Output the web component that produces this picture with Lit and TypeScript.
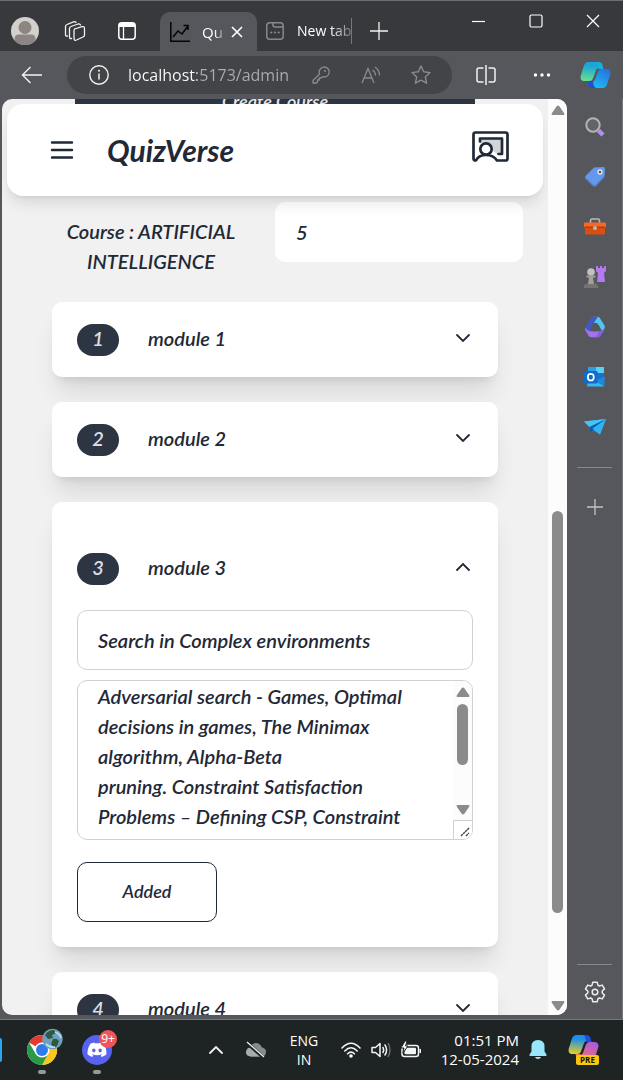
import { LitElement, html, css, svg, nothing } from "lit";
import { customElement, property, state } from "lit/decorators.js";

interface CourseModule {
  id: number;
  name: string;
  topic: string;
  outline: string;
}

const MODULES: CourseModule[] = [
  { id: 1, name: "module 1", topic: "", outline: "" },
  { id: 2, name: "module 2", topic: "", outline: "" },
  {
    id: 3,
    name: "module 3",
    topic: "Search in Complex environments",
    outline:
      "Adversarial search - Games, Optimal decisions in games, The Minimax algorithm, Alpha-Beta pruning.\u00a0Constraint Satisfaction Problems – Defining CSP, Constraint Propagation, backtracking search",
  },
  { id: 4, name: "module 4", topic: "", outline: "" },
];

const line = (w: number, h: number, body: unknown, cls = "") =>
  html`<svg class="icon ${cls}" width=${w} height=${h} viewBox="0 0 ${w} ${h}" aria-hidden="true">${body}</svg>`;

const copilotShape = (c: string[]) => svg`
  <defs>
    <linearGradient id="ca" x1="0.4" y1="0" x2="0.3" y2="1"><stop offset="0.2" stop-color=${c[0]}/><stop offset="1" stop-color=${c[1]}/></linearGradient>
    <linearGradient id="cb" x1="0.8" y1="0" x2="0.3" y2="1"><stop offset="0" stop-color=${c[2]}/><stop offset="1" stop-color=${c[3]}/></linearGradient>
  </defs>
  <path d="M9 1h9.500q3 0 4 3.200L23.500 8H20q-3 0-4-3T12 2z" fill=${c[4]}/>
  <path d="M22 27h-9.500q-3 0-4-3.200L7.500 20H11q3 0 4 3t4 3z" fill=${c[5]}/>
  <path d="M8.500 1H14q2.500 0 3.300 3l.7 3q-1.500.5-2.300 3L13 17.500q-1 2.500-3.500 2.500H5Q-.5 20 .8 14.500L4 4.500Q5.200 1 8.500 1z" fill="url(#ca)"/>
  <path d="M22.500 27H17q-2.500 0-3.300-3L13 21q1.500-.5 2.300-3L18 10.500Q19 8 21.500 8H26q5.500 0 4.200 5.500L27 23.500Q25.800 27 22.500 27z" fill="url(#cb)"/>`;

const icons = {
  avatar: line(28, 28, svg`
    <circle cx="14" cy="14" r="14" fill="#d3cfcb"/>
    <circle cx="14" cy="10.500" r="6.500" fill="#8b8683"/>
    <path d="M3.500 23.500Q3 17.500 8 17.500h12q5 0 4.500 6A14 14 0 0 1 3.500 23.500z" fill="#8b8683"/>`),
  workspaces: line(22, 22, svg`
    <g fill="none" stroke="#f2f2f2" stroke-width="1.300" stroke-linejoin="round" stroke-linecap="round">
      <path d="M10.500 9l7.500-2.300q2.500-.7 2.500 1.800v6.500q0 1.500-1.500 2l-6.500 3q-2.500 1-2.500-1.500V10.500q0-1.200 1-1.500z"/>
      <path d="M7.500 18.500q-2 .500-2-1.500V8.500q0-1.500 1.500-2L14 4q2-.500 2.500 1"/>
      <path d="M3.500 16q-2 .500-2-1.500V6.500Q1.500 5 3 4.500L9.500 1.800q2-.6 2.500.7"/>
    </g>`),
  verticalTabs: line(18, 18, svg`
    <rect x=".8" y=".8" width="16.400" height="16.400" rx="3" fill="none" stroke="#fff" stroke-width="1.500"/>
    <path d="M1 5V3.500Q1 1 3.500 1h11Q17 1 17 3.500V5z" fill="#fff"/><path d="M5.500 5v12" stroke="#fff" stroke-width="1.300"/>`),
  chart: line(20, 20, svg`
    <path d="M.8 0v19.200H20M3 15l5-6 4 3 6-8M13.500 3.500H18V8" fill="none" stroke="#050505" stroke-width="1.500"/>`),
  close: line(12, 12, svg`<path d="M1 1l10 10M11 1L1 11" stroke="#fff" stroke-width="1.600"/>`),
  newTabPage: line(18, 18, svg`
    <g fill="none" stroke="#88898c" stroke-width="1.500"><rect x=".8" y=".8" width="16.400" height="16.400" rx="3"/><path d="M7 1v2q0 2 2 2h8"/></g>
    <g fill="#88898c"><circle cx="5.300" cy="10.500" r="1.100"/><circle cx="9" cy="10.500" r="1.100"/><circle cx="12.700" cy="10.500" r="1.100"/></g>`),
  plus: line(18, 18, svg`<path d="M9 0v18M0 9h18" stroke="#f2f2f2" stroke-width="1.300"/>`),
  plusDim: line(16, 16, svg`<path d="M8 0v16M0 8h16" stroke="#c4c4c6" stroke-width="1.300"/>`),
  minimise: line(14, 14, svg`<path d="M0 7.500h13" stroke="#fff" stroke-width="1.200"/>`),
  maximise: line(14, 14, svg`<rect x="1" y="1" width="12" height="12" rx="1.500" fill="none" stroke="#fff" stroke-width="1.200"/>`),
  quit: line(14, 14, svg`<path d="M1 1l12 12M13 1L1 13" stroke="#fff" stroke-width="1.200"/>`),
  back: line(22, 18, svg`<path d="M9.500 1L1.500 9l8 8M1.500 9H21" fill="none" stroke="#f2f2f2" stroke-width="1.400"/>`),
  info: line(22, 22, svg`
    <circle cx="11" cy="11" r="9.200" fill="none" stroke="#f2f2f2" stroke-width="1.400"/>
    <path d="M11 9.500v6" stroke="#f2f2f2" stroke-width="1.500"/><circle cx="11" cy="6.800" r="1" fill="#f2f2f2"/>`),
  key: line(18, 18, svg`
    <g fill="none" stroke="#8a8b8d" stroke-width="1.300" stroke-linejoin="round"><path d="M1 14.500L7.600 8A5 5 0 1 1 10.500 10.700L9 12H7.200v2H5.500v2l-1 1H1z"/></g>
    <circle cx="13" cy="5" r="1" fill="#8a8b8d"/>`),
  readAloud: line(20, 18, svg`
    <g fill="none" stroke="#8a8b8d" stroke-width="1.300"><path d="M1 17L7 2.500 13 17M3.200 12h7.600M11.500 4q3 2 3 5.500M14 1q4.500 3 4.500 8.500"/></g>`),
  star: line(20, 20, svg`
    <path d="M10 1l2.700 5.800 6.300.8-4.700 4.300 1.300 6.300L10 15.100l-5.600 3.100 1.300-6.300L1 7.600l6.300-.8z" fill="none" stroke="#8a8b8d" stroke-width="1.400" stroke-linejoin="round"/>`),
  split: line(20, 20, svg`
    <g fill="none" stroke="#f2f2f2" stroke-width="1.500"><path d="M7.500 3H3Q1 3 1 5v10q0 2 2 2h4.500M12.500 3H17q2 0 2 2v10q0 2-2 2h-4.500M10 0v20"/></g>`),
  dots: line(18, 6, svg`<g fill="#fff"><circle cx="2.500" cy="3" r="1.700"/><circle cx="9" cy="3" r="1.700"/><circle cx="15.500" cy="3" r="1.700"/></g>`),
  copilot: line(31, 28, copilotShape(["#1aa7d8", "#6be08a", "#2870e0", "#1eb8f4", "#14b0e4", "#1c50dc"])),
  search: line(22, 22, svg`
    <circle cx="9" cy="9" r="6.700" fill="#616369" stroke="#b5b3b0" stroke-width="2"/>
    <path d="M14.500 14.500l4.500 4.500" stroke="#b78cf0" stroke-width="4.500"/>`),
  tag: line(22, 22, svg`
    <path d="M10 1.500L19 1q2 0 2 2l-.5 8L12 20q-1.500 1-3 0L1.500 13q-1-1.500 0-3z" fill="#6597ea"/>
    <path d="M1.200 11L9 18.500q1.500 1 3 0l8.600-9-.1 1.500L12 20q-1.500 1-3 0L1.500 13q-.6-1-.3-2z" fill="#4d7bd0"/>
    <circle cx="16" cy="6" r="2" fill="#56575c" stroke="#e6e6e6" stroke-width="1.300"/>`),
  toolbox: line(22, 20, svg`
    <path d="M6.500 6V3.500Q6.500 2 8 2h6q1.500 0 1.500 1.500V6" fill="none" stroke="#b9bab9" stroke-width="1.600"/>
    <rect x="0" y="5.500" width="22" height="5" rx="1" fill="#f26a26"/><path d="M1 10h20v6.500q0 1-1 1H2q-1 0-1-1z" fill="#dc4d12"/>
    <path d="M1 9.500h20v1.500H1z" fill="#b93c0b"/><circle cx="11" cy="11" r="2" fill="#bcb8b4"/>`),
  chess: line(22, 22, svg`
    <path d="M12 0h2v2h2V0h2v2h2V0h2v5l-2 2 1 9h-8l1-9-2-2z" fill="#b37bee"/>
    <circle cx="7" cy="6" r="3.800" fill="#c2c1bd"/><path d="M2.500 9.500h9v2h-9zM5 11.500h4l1 6.500h1.500q2 0 2 2.500V22H.5v-1.500Q.5 18 2.500 18H4z" fill="#a3a19e"/>
    <path d="M.5 20Q.5 18 2.500 18h9q2 0 2 2v2H.5z" fill="#76746f"/>`),
  m365: line(22, 22, svg`
    <path d="M9 .8h5q1 0 1.500.7l5 8q.8 1.500 0 3L18.500 16 15 9.500Q13.500 7 11 7H8L6.500 3Q7.500 1 9 .8z" fill="#52c6f0"/>
    <path d="M9 .8Q7.500 1 6.500 2.500l-5.200 9q-.6 1.500.1 2.800L5 20l1-4.500q0-1.500 1-3L10.500 6 14 .8z" fill="#4457c4"/>
    <path d="M1.300 11.500q-.6 1.500.1 2.800l3.200 5.500Q5.500 21.200 7 21.200h7q1.500 0 2.300-1.300l4.200-7q-1.500 2.300-4.500 2.300H7.500Q3 15 1.300 11.500z" fill="#a472ea"/>
    <path d="M20.500 12.500l-4.200 7.300q-.8 1.400-2.300 1.400h-2l3-6q3 0 5.500-2.700z" fill="#7b63e4"/>
    <path d="M9 7h4l2.400 4-2.400 4.200H8.500L6.700 12z" fill="#56575c"/>`),
  outlook: line(22, 20, svg`
    <rect x="4" y="0" width="16" height="13" rx="1" fill="#2f9ee6"/><path d="M12 0h8v6h-8z" fill="#5ad0f7"/><path d="M12 6h8v6h-8z" fill="#1373cf"/>
    <path d="M3 19.500h16.500l1-9.500L12 15l-8-4z" fill="#35b8ee"/><path d="M20.500 10v9.500L10 13.500z" fill="#1b88d8"/>
    <rect x="0" y="4" width="13.500" height="12.500" rx="1.200" fill="#0f6cc9"/><ellipse cx="6.800" cy="10.200" rx="3" ry="3.300" fill="none" stroke="#fff" stroke-width="1.700"/>`),
  plane: line(22, 18, svg`
    <path d="M0 3.500L22 1 16 16.500l-6-4-2.500 2L5.500 9z" fill="#2fa9ec"/><path d="M0 3.500L22 1 5.500 9z" fill="#45c4f6"/>
    <path d="M22 1L5.500 9l1.500 6 3-3z" fill="#0b5cab"/><path d="M22 1L8.500 10.500 16 16.500z" fill="#30b3f2"/>`),
  gear: line(22, 22, svg`
    <path d="M8.800 1.200h4.400l.7 3 1.400.8 3-.9 2.200 3.800-2.300 2.100v2l2.300 2.100-2.200 3.800-3-.9-1.400.8-.7 3H8.800l-.7-3-1.400-.8-3 .9-2.200-3.800L3.800 12v-2L1.500 7.900l2.200-3.800 3 .9 1.400-.8z" fill="none" stroke="#ececec" stroke-width="1.500" stroke-linejoin="round"/>
    <circle cx="11" cy="11" r="2.800" fill="none" stroke="#ececec" stroke-width="1.500"/>`),
  menu: line(24, 20, svg`<path d="M2 2.500h20M2 10h20M2 17.500h20" stroke="#1f2937" stroke-width="2.400" stroke-linecap="round"/>`),
  teacher: line(40, 36, svg`
    <path d="M10 10.500h22V26h-5l-5.500-4.500-4-6L10 15z" fill="#d2d4d7"/>
    <g fill="none" stroke="#1f2937" stroke-width="2.700" stroke-linecap="round" stroke-linejoin="round">
      <path d="M6 32.500Q3.500 32.500 3.500 30.500V6.500Q3.500 4.500 5.500 4.500h30q2 0 2 2v24q0 2-2 2H27Q23.500 27 16 27T6 32.500z"/>
      <path d="M10 13.500v-3h22V26h-3.500"/><circle cx="16" cy="21" r="5.700" fill="#fff"/>
    </g>`),
  triUp: line(14, 10, svg`<path d="M1.500 10Q0 10 1 8L5.500 1.500Q7-.5 8.500 1.500L13 8q1 2-.5 2z" fill="#8b8b8b"/>`),
  triDown: line(14, 10, svg`<path d="M1.500 0Q0 0 1 2l4.500 6.500q1.500 2 3 0L13 2q1-2-.5-2z" fill="#8b8b8b"/>`),
  chevronDown: line(16, 10, svg`<path d="M2 2l6 6 6-6" fill="none" stroke="#1f2937" stroke-width="1.800" stroke-linecap="round"/>`),
  chevronUp: line(16, 10, svg`<path d="M2 8l6-6 6 6" fill="none" stroke="#1f2937" stroke-width="1.800" stroke-linecap="round"/>`),
  chrome: line(46, 46, svg`
    <circle cx="23" cy="23" r="15" fill="#fff"/>
    <path d="M23 23L10 15.500A15 15 0 0 1 36 15.500H23z" fill="#e33b2e"/>
    <path d="M23 23L36 15.500A15 15 0 0 1 23 38l6.500-11.500z" fill="#fcc61a"/>
    <path d="M23 23l6.500 3.500L23 38A15 15 0 0 1 10 15.500l6.500 11z" fill="#289a48"/>
    <circle cx="23" cy="23" r="7.500" fill="#fff"/><circle cx="23" cy="23" r="6" fill="#3079ea"/>
    <circle cx="33.500" cy="12" r="10.300" fill="#6c9fc0"/><path d="M26 8q3-5 9-5l2 3-4 2 1 3-5 1zM34 12q4-1 6 2l-2 5-3 2-3-4z" fill="#2f5a3c"/>
    <path d="M27 17q4 4 9 3M36 5q5 2 6 6" fill="none" stroke="#bcdcec" stroke-width="1.800"/>`),
  discord: line(30, 30, svg`
    <circle cx="15" cy="15" r="15" fill="#5763ee"/>
    <g transform="translate(5.500 5.200) scale(.79)"><path fill="#fff" d="M20.317 4.3698a19.7913 19.7913 0 00-4.8851-1.5152.0741.0741 0 00-.0785.0371c-.211.3753-.4447.8648-.6083 1.2495-1.8447-.2762-3.68-.2762-5.4868 0-.1636-.3933-.4058-.8742-.6177-1.2495a.077.077 0 00-.0785-.037 19.7363 19.7363 0 00-4.8852 1.515.0699.0699 0 00-.0321.0277C.5334 9.0458-.319 13.5799.0992 18.0578a.0824.0824 0 00.0312.0561c2.0528 1.5076 4.0413 2.4228 5.9929 3.0294a.0777.0777 0 00.0842-.0276c.4616-.6304.8731-1.2952 1.226-1.9942a.076.076 0 00-.0416-.1057c-.6528-.2476-1.2743-.5495-1.8722-.8923a.077.077 0 01-.0076-.1277c.1258-.0943.2517-.1923.3718-.2914a.0743.0743 0 01.0776-.0105c3.9278 1.7933 8.18 1.7933 12.0614 0a.0739.0739 0 01.0785.0095c.1202.099.246.1981.3728.2924a.077.077 0 01-.0066.1276 12.2986 12.2986 0 01-1.873.8914.0766.0766 0 00-.0407.1067c.3604.698.7719 1.3628 1.225 1.9932a.076.076 0 00.0842.0286c1.961-.6067 3.9495-1.5219 6.0023-3.0294a.077.077 0 00.0313-.0552c.5004-5.177-.8382-9.6739-3.5485-13.6604a.061.061 0 00-.0312-.0286zM8.02 15.3312c-1.1825 0-2.1569-1.0857-2.1569-2.419 0-1.3332.9555-2.4189 2.157-2.4189 1.2108 0 2.1757 1.0952 2.1568 2.419 0 1.3332-.9555 2.4189-2.1569 2.4189zm7.9748 0c-1.1825 0-2.1569-1.0857-2.1569-2.419 0-1.3332.9554-2.4189 2.1569-2.4189 1.2108 0 2.1757 1.0952 2.1568 2.419 0 1.3332-.946 2.4189-2.1568 2.4189Z"/></g>`),
  tray: line(14, 10, svg`<path d="M1 8l6-6 6 6" fill="none" stroke="#f2f2f2" stroke-width="1.800" stroke-linecap="round"/>`),
  cloudOff: line(20, 18, svg`
    <path d="M5 15.500Q0 15 0 11t4.500-4.500Q6 2 10 2t6 4.500Q20 7 20 11t-5 4.500z" fill="#858a8a"/><path d="M2 7q5-1 8 2l9 5q-2 1.500-4 1.500H5Q0 15 0 11z" fill="#a6abab"/>
    <path d="M1 2l17 15" stroke="#1e2423" stroke-width="3.500"/><path d="M1 1l17 15" stroke="#eee" stroke-width="1.300"/>`),
  wifi: line(20, 16, svg`
    <g fill="none" stroke="#f5f5f5" stroke-width="1.600" stroke-linecap="round"><path d="M1 6q9-9.500 18 0M3.800 9q6.200-6.500 12.400 0M6.600 11.800q3.400-3.400 6.800 0"/></g><circle cx="10" cy="14" r="1.800" fill="#fff"/>`),
  speaker: line(20, 18, svg`
    <g fill="none" stroke="#f5f5f5" stroke-width="1.500" stroke-linecap="round" stroke-linejoin="round"><path d="M1 6.500h3.500L9 2.500v13l-4.500-4H1zM12 6.500q1.500 2.500 0 5M14 4q3.200 5 0 10"/></g>
    <path d="M17 2q4 7 0 14" fill="none" stroke="#6b7070" stroke-width="1.400"/>`),
  battery: line(20, 18, svg`
    <rect x="1" y="4.500" width="16.500" height="11" rx="2.500" fill="none" stroke="#f5f5f5" stroke-width="1.500"/><rect x="3.500" y="6.800" width="11.500" height="6.500" rx="1" fill="#f5f5f5"/>
    <path d="M18.500 8h1.500v4h-1.500z" fill="#f5f5f5"/><path d="M4 0L0 7h3l-1 5 5-7H4.500L6 0z" fill="#fff" stroke="#1e2423" stroke-width="1"/>`),
  bell: line(18, 20, svg`
    <path d="M9 0q6.500 0 6.500 6.500v5l2 3q.5 1.500-1 1.500h-15q-1.500 0-1-1.500l2-3v-5Q2.500 0 9 0zM6 17h6q-.5 2-3 2t-3-2z" fill="#97e6fb"/>`),
  copilotPre: line(31, 28, copilotShape(["#1e8fe8", "#e8d020", "#a858e8", "#f0706e", "#1c50dc", "#e8803c"])),
};

const base = css`
  * { box-sizing: border-box; }
  button { font: inherit; color: inherit; background: none; border: 0; padding: 0; margin: 0; display: flex; align-items: center; justify-content: center; }
  .icon { display: block; flex: none; }
`;

@customElement("browser-tabs")
export class BrowserTabs extends LitElement {
  static styles = [base, css`
    :host { display: flex; height: 51px; background: #38393c; border-top: 1px solid #6d6e70; color: #fff; font: 15px/20px "Open Sans", "Noto Sans", sans-serif; }
    .tool { width: 50px; height: 60px; }
    .tool.wide { width: 54px; margin-right: 6px; }
    .tab { display: flex; align-items: center; }
    .tab.active { margin-top: 11px; padding: 0 14px 0 10px; background: #56575c; border-radius: 10px 10px 0 0; }
    .text { white-space: nowrap; -webkit-mask-image: linear-gradient(to right, #000 60%, rgba(0, 0, 0, .3)); mask-image: linear-gradient(to right, #000 60%, rgba(0, 0, 0, .3)); }
    .active .text { width: 21px; margin: 0 8px 0 12px; }
    .idle { height: 60px; padding-left: 9px; }
    .idle .text { width: 54px; margin-left: 13px; font-size: 14px; }
    .bar { width: 1px; height: 26px; background: #77787b; margin-right: 2px; }
    .windows { display: flex; margin-left: auto; padding-right: 2px; }
    .windows button { width: 57px; height: 39px; }
  `];
  render() {
    return html`
      <button class="tool" aria-label="Profile">${icons.avatar}</button>
      <button class="tool" aria-label="Workspaces">${icons.workspaces}</button>
      <button class="tool wide" aria-label="Tab actions">${icons.verticalTabs}</button>
      <div class="tab active">${icons.chart}<span class="text">Qu</span><button aria-label="Close tab">${icons.close}</button></div>
      <div class="tab idle">${icons.newTabPage}<span class="text">New tab</span><span class="bar"></span></div>
      <button class="tool" aria-label="Add tab">${icons.plus}</button>
      <div class="windows">
        <button aria-label="Minimise">${icons.minimise}</button>
        <button aria-label="Maximise">${icons.maximise}</button>
        <button aria-label="Close">${icons.quit}</button>
      </div>`;
  }
}

@customElement("browser-toolbar")
export class BrowserToolbar extends LitElement {
  static styles = [base, css`
    :host { display: flex; align-items: center; height: 48px; padding-right: 1px; background: #56575c; }
    .back { width: 64px; height: 48px; margin-right: 3px; }
    .address { flex: 1; min-width: 0; display: flex; align-items: center; height: 38px; padding: 0 6px 0 21px; border-radius: 19px; background: #434448; }
    .url { flex: 1; min-width: 0; height: 30px; margin-left: 18px; padding: 0; border: 0; outline: 0; font: 16px/30px "Open Sans", "Noto Sans", sans-serif; color: #fff;
      background: linear-gradient(to right, #fff 69px, #acadae 69px); -webkit-background-clip: text; background-clip: text; -webkit-text-fill-color: transparent; }
    .address button { width: 50px; height: 38px; }
    .address .info { width: 22px; }
    .cell { width: 56px; height: 48px; }
    .address + .cell { margin-left: 6px; }
    .cell.end { width: 52px; padding-right: 2px; }
  `];
  render() {
    return html`
      <button class="back" aria-label="Back">${icons.back}</button>
      <div class="address">
        <button class="info" aria-label="Site information">${icons.info}</button>
        <input class="url" aria-label="Address" .value=${"localhost:5173/admin"}>
        <button aria-label="Passwords">${icons.key}</button>
        <button aria-label="Read aloud">${icons.readAloud}</button>
        <button aria-label="Add to favourites">${icons.star}</button>
      </div>
      <button class="cell" aria-label="Split screen">${icons.split}</button>
      <button class="cell" aria-label="Settings and more">${icons.dots}</button>
      <button class="cell end" aria-label="Copilot">${icons.copilot}</button>`;
  }
}

@customElement("browser-sidebar")
export class BrowserSidebar extends LitElement {
  static styles = [base, css`
    :host { display: flex; flex-direction: column; align-items: center; width: 56px; padding: 3px 0 2px; background: #56575c; border-right: 1px solid #77787b; }
    button { width: 50px; height: 50px; flex: none; }
    .rule { width: 35px; height: 1px; margin: 15px 0 14px; background: #88898c; flex: none; }
    .rule.low { margin: auto 0 2px; }
  `];
  render() {
    const apps = [["Search", icons.search], ["Shopping", icons.tag], ["Tools", icons.toolbox], ["Games", icons.chess], ["Microsoft 365", icons.m365], ["Outlook", icons.outlook], ["Drop", icons.plane]] as const;
    return html`
      ${apps.map(([label, icon]) => html`<button aria-label=${label}>${icon}</button>`)}
      <span class="rule"></span>
      <button aria-label="Customise">${icons.plusDim}</button>
      <span class="rule low"></span>
      <button aria-label="Settings">${icons.gear}</button>`;
  }
}

@customElement("module-card")
export class ModuleCard extends LitElement {
  @property({ attribute: false }) module!: CourseModule;
  @property({ type: Boolean, reflect: true }) open = false;
  static styles = [base, css`
    :host { display: block; padding: 0 25px; border-radius: 10px; background: #fff; box-shadow: 0 20px 25px -5px rgba(0, 0, 0, .1), 0 8px 10px -6px rgba(0, 0, 0, .1); }
    :host([open]) { padding: 29px 25px 25px; }
    .head { width: 100%; height: 75px; padding-bottom: 4px; justify-content: flex-start; }
    .pill { width: 42px; height: 32px; margin: 4px 29px 0 0; border-radius: 16px; background: #2d3542; color: #d9dde3; line-height: 28px; text-align: center; }
    .head .icon { margin-left: auto; margin-right: 2px; }
    .body { display: grid; gap: 10px; padding-top: 4px; }
    .field { width: 100%; height: 60px; padding: 0 20px; border: 1px solid #d1d1d4; border-radius: 10px; background: #fff; font: inherit; color: inherit; outline: 0; }
    .area { position: relative; height: 160px; }
    .area textarea { display: block; width: 100%; height: 160px; padding: 0 38px 0 20px; border: 1px solid #d1d1d4; border-radius: 10px; background: #fff; font: inherit; color: inherit; resize: none; overflow: hidden; outline: 0; }
    .scroll { position: absolute; top: 1px; right: 1px; bottom: 1px; width: 19px; display: flex; flex-direction: column; align-items: center; padding-top: 6px; border-radius: 0 9px 9px 0; overflow: hidden; background: #fcfcfc; }
    .thumb { width: 11px; height: 61px; margin: 7px 0 auto; border-radius: 6px; background: #8b8b8b; }
    .grip { align-self: stretch; display: flex; align-items: flex-end; justify-content: flex-end; height: 19px; margin-top: 5px; padding: 2px; border: 1px solid #d1d1d4; border-width: 1px 0 0 1px; background: #fff; }
    .save { width: 140px; height: 60px; margin-top: 12px; padding-bottom: 2px; border: 1px solid #1f2937; border-radius: 10px; font-size: 18px; }
  `];
  private toggle() { this.open = !this.open; }
  render() {
    const m = this.module;
    return html`
      <button class="head" aria-expanded=${this.open ? "true" : "false"} @click=${this.toggle}>
        <span class="pill">${m.id}</span><span>${m.name}</span>${this.open ? icons.chevronUp : icons.chevronDown}
      </button>
      ${this.open ? html`
        <div class="body">
          <input class="field" aria-label="Module topic" .value=${m.topic}>
          <div class="area">
            <textarea aria-label="Module outline" .value=${m.outline}></textarea>
            <div class="scroll" aria-hidden="true">
              ${icons.triUp}<span class="thumb"></span>${icons.triDown}
              <span class="grip">${line(10, 10, svg`<path d="M1 9l8-8M6 9l3-3" stroke="#444" stroke-width="1.400" stroke-dasharray="2.500 .5"/>`)}</span>
            </div>
          </div>
          <button class="save">Added</button>
        </div>` : nothing}`;
  }
}

@customElement("task-bar")
export class TaskBar extends LitElement {
  static styles = [base, css`
    :host { display: flex; align-items: center; height: 61px; padding-right: 14px; border-top: 1px solid #77787b; background: #1e2423; color: #fff; font: 15px/19px "Open Sans", "Noto Sans", sans-serif; }
    .sliver { width: 2px; height: 24px; margin-right: 12px; border-radius: 0 2px 2px 0; background: #2ba7ee; }
    .app { position: relative; width: 55px; height: 60px; }
    .app::after { content: ""; position: absolute; bottom: 6px; width: 8px; height: 4px; border-radius: 2px; background: #969a9a; }
    .badge { position: absolute; top: 10px; left: 30px; width: 18px; height: 18px; border-radius: 9px; background: #f0555a; font-size: 12px; line-height: 17px; text-align: center; }
    .tray { width: 40px; height: 60px; }
    .first { margin-left: auto; }
    .lang { width: 56px; height: 60px; margin-right: 3px; font-size: 14px; text-align: center; }
    .status { width: 92px; display: flex; justify-content: space-between; height: 60px; padding: 0 6px; }
    .clock { width: 92px; height: 60px; justify-content: flex-end; text-align: right; white-space: nowrap; }
    .notice { width: 38px; height: 60px; }
    .copilot { position: relative; width: 52px; height: 60px; padding-bottom: 4px; }
    .pre { position: absolute; left: 19px; bottom: 15px; width: 23px; border-radius: 2px; background: #fbc70c; color: #16130a; font-size: 8px; font-weight: 700; line-height: 10px; text-align: center; }
  `];
  render() {
    return html`
      <span class="sliver"></span>
      <button class="app" aria-label="Chrome">${icons.chrome}</button>
      <button class="app" aria-label="Discord">${icons.discord}<span class="badge">9+</span></button>
      <button class="tray first" aria-label="Hidden icons">${icons.tray}</button>
      <button class="tray" aria-label="Cloud offline">${icons.cloudOff}</button>
      <button class="lang"><span>ENG<br>IN</span></button>
      <button class="status" aria-label="Network, volume, battery">${icons.wifi}${icons.speaker}${icons.battery}</button>
      <button class="clock"><span>01:51 PM<br>12-05-2024</span></button>
      <button class="notice" aria-label="Notifications">${icons.bell}</button>
      <button class="copilot" aria-label="Copilot preview">${icons.copilotPre}<span class="pre">PRE</span></button>`;
  }
}

@customElement("app-root")
export class AppRoot extends LitElement {
  @state() private count = "5";
  static styles = [base, css`
    :host { display: flex; flex-direction: column; height: 100vh; overflow: hidden; background: #56575c; }
    .main { flex: 1; min-height: 0; display: flex; }
    .frame { flex: 1; min-width: 0; display: flex; margin: 0 0 4px 2px; border-radius: 10px; overflow: hidden; background: #f1f1f1; }
    .page { position: relative; flex: 1; min-width: 0; overflow: hidden; color: #1f2937; font: italic 600 20px/30px Lato, Carlito, sans-serif; }
    .top { position: absolute; top: 5px; left: 5px; right: 5px; height: 92px; display: flex; align-items: center; padding: 0 33px 0 43px; border-radius: 16px; background: #fff; box-shadow: 0 10px 15px -3px rgba(0, 0, 0, .1), 0 4px 6px -4px rgba(0, 0, 0, .1); }
    .brand { margin: 0 auto 0 33px; font-size: 30px; line-height: 36px; font-weight: 700; }
    .teach { margin-bottom: 8px; }
    .create { width: 400px; max-width: 100%; height: 60px; margin: -28px auto 0; background: #2d3542; color: #e3e6ea; font-size: 18px; }
    .course { display: grid; grid-template-columns: 1fr 1fr; align-items: start; margin: 71px 25px 25px; }
    .course label { padding: 14px 20px 0; text-align: center; }
    .course input { width: 100%; height: 60px; padding: 0 21px; border: 0; border-radius: 10px; background: #fff; font: inherit; color: inherit; outline: 0; }
    .list { display: grid; gap: 25px; padding: 0 50px; }
    .course { min-height: 75px; }
    .rail { width: 19px; display: flex; flex-direction: column; align-items: center; padding: 6px 0 4px; background: #fcfcfc; }
    .track { flex: 1; width: 11px; display: flex; flex-direction: column; }
    .lead { flex: 396; }
    .thumb { flex: 402; border-radius: 6px; background: #8b8b8b; }
    .rest { flex: 88; }
  `];
  render() {
    return html`
      <browser-tabs></browser-tabs>
      <browser-toolbar></browser-toolbar>
      <div class="main">
        <div class="frame">
          <main class="page">
            <button class="create">Create Course</button>
            <div class="course">
              <label for="count">Course : ARTIFICIAL INTELLIGENCE</label>
              <input id="count" .value=${this.count} @input=${(e: Event) => (this.count = (e.target as HTMLInputElement).value)}>
            </div>
            <div class="list">
              ${MODULES.map((m) => html`<module-card .module=${m} ?open=${m.id === 3}></module-card>`)}
            </div>
            <header class="top">
              <button aria-label="Menu">${icons.menu}</button>
              <h1 class="brand">QuizVerse</h1>
              <button class="teach" aria-label="Classroom">${icons.teacher}</button>
            </header>
          </main>
          <div class="rail" aria-hidden="true">
            ${icons.triUp}
            <div class="track"><span class="lead"></span><span class="thumb"></span><span class="rest"></span></div>
            ${icons.triDown}
          </div>
        </div>
        <browser-sidebar></browser-sidebar>
      </div>
      <task-bar></task-bar>`;
  }
}
